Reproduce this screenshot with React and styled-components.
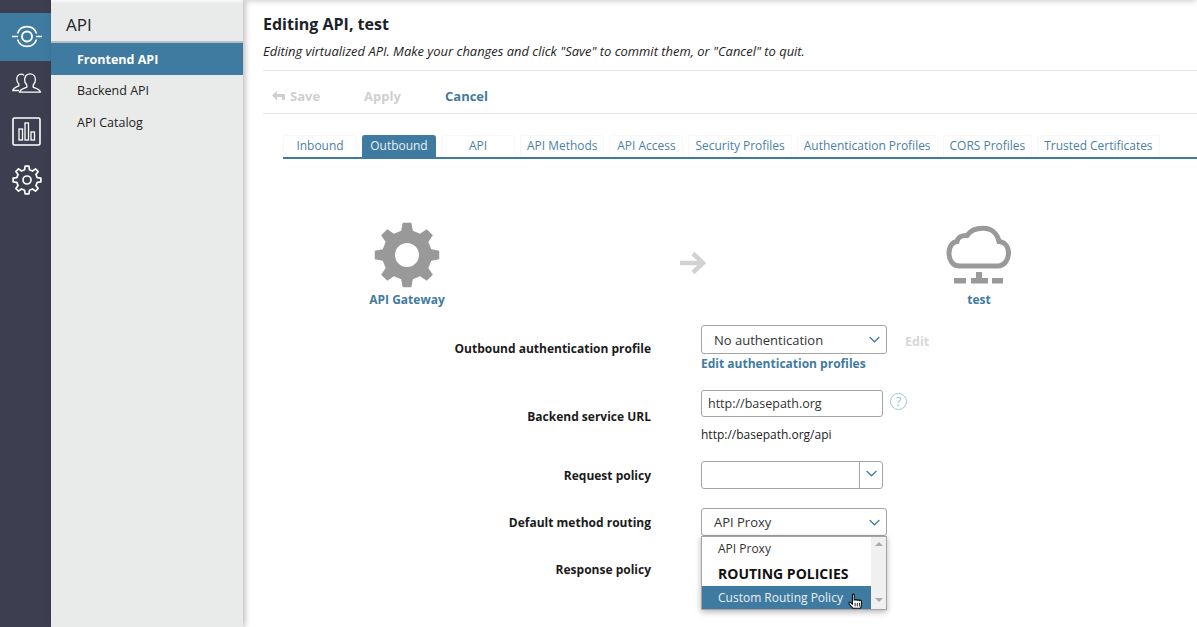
import React from 'react'
import styled, { createGlobalStyle } from 'styled-components'

const blue = '#3f7ba1'

const GlobalStyle = createGlobalStyle`
  html, body { margin: 0; padding: 0; height: 100%; overflow: hidden; background: #fff; }
  body { font-family: "Open Sans", "Noto Sans", sans-serif; color: #1b1b1b; }
  #root { height: 100%; }
  * { box-sizing: border-box; }
`

const gearPath = (cx, cy, outer, root, teeth, hole) => {
  const pts = []
  const step = (Math.PI * 2) / teeth
  for (let i = 0; i < teeth; i++) {
    const a = i * step - Math.PI / 2
    const w = step * 0.17
    const w2 = step * 0.3
    const p = (r, t) => `${(cx + r * Math.cos(t)).toFixed(2)} ${(cy + r * Math.sin(t)).toFixed(2)}`
    pts.push(p(root, a - w2), p(outer, a - w), p(outer, a + w), p(root, a + w2))
  }
  let d = `M${pts.join('L')}Z`
  if (hole) d += `M${cx - hole} ${cy}a${hole} ${hole} 0 1 0 ${hole * 2} 0a${hole} ${hole} 0 1 0 ${-hole * 2} 0Z`
  return d
}

const Page = styled.div`
  display: flex;
  height: 627px;
  width: 1197px;
  overflow: hidden;
`

const Rail = styled.nav`
  width: 51px;
  flex-shrink: 0;
  background: #3d3f51;
  padding-top: 13px;
  display: flex;
  flex-direction: column;
`

const RailItem = styled.div`
  height: ${p => p.$h}px;
  display: flex;
  align-items: center;
  justify-content: center;
  padding-left: 2px;
  background: ${p => (p.$active ? blue : 'transparent')};
  svg { display: block; }
`

const Sidebar = styled.aside`
  width: 192px;
  flex-shrink: 0;
  background: #e9ebea;
  box-shadow: 2px 0 6px rgba(0, 0, 0, 0.28);
  position: relative;
  z-index: 1;
  &::before {
    content: '';
    position: absolute;
    left: 0;
    right: 0;
    top: 0;
    height: 4px;
    background: linear-gradient(#f8f8f8, #e9ebea);
  }
`

const SideTitle = styled.div`
  height: 43px;
  padding: 12px 0 0 15px;
  font-size: 17px;
  line-height: 25px;
  color: #222;
  border-bottom: 2px solid #b9bdbd;
`

const SideItem = styled.div`
  height: 32px;
  padding-left: 26px;
  font-size: 12.5px;
  line-height: ${p => (p.$active ? '34px' : '32px')};
  font-weight: ${p => (p.$active ? 700 : 400)};
  background: ${p => (p.$active ? blue : 'transparent')};
  color: ${p => (p.$active ? '#fff' : '#222')};
`

const Main = styled.main`
  flex: 1;
  min-width: 0;
  padding: 0 0 0 20px;
  position: relative;
  &::before {
    content: '';
    position: absolute;
    left: 0;
    right: 0;
    top: -4px;
    height: 4px;
    box-shadow: 0 0 6px rgba(0, 0, 0, 0.3);
  }
`

const Title = styled.h1`
  margin: 0;
  padding-top: 13px;
  font-size: 16px;
  line-height: 23px;
  font-weight: 700;
  color: #1c2229;
`

const Subtitle = styled.p`
  margin: 0;
  padding-top: 6px;
  height: 35px;
  font-size: 12.95px;
  line-height: 18px;
  font-style: italic;
  color: #222;
  border-bottom: 1px solid #e6e6e6;
`

const Toolbar = styled.div`
  display: flex;
  align-items: center;
  height: 43px;
  border-bottom: 1px solid #e6e6e6;
  padding: 8px 0 0 9px;
`

const ToolButton = styled.span`
  display: flex;
  align-items: center;
  gap: 5px;
  font-size: 13px;
  font-weight: 700;
  width: ${p => p.$w}px;
  color: ${p => (p.$disabled ? '#cfcfcf' : blue)};
`

const Tabs = styled.div`
  display: flex;
  gap: 5px;
  margin: 21px 0 0 20px;
  height: 24px;
  border-bottom: 2px solid ${blue};
  width: 914px;
`

const Tab = styled.div`
  min-width: 74px;
  padding: 0 6px;
  height: 22px;
  text-align: center;
  font-size: 11.96px;
  line-height: 20px;
  border: 1px solid ${p => (p.$active ? blue : '#f8f8f8')};
  border-bottom: 0;
  border-radius: 3px 3px 0 0;
  background: ${p => (p.$active ? blue : '#fff')};
  color: ${p => (p.$active ? '#e8f0f5' : '#4b7fa3')};
  white-space: nowrap;
`

const Diagram = styled.div`
  display: grid;
  grid-template-columns: 120px 1fr 120px;
  align-items: start;
  width: 692px;
  margin: 63px 0 0 84px;
`

const Node = styled.div`
  display: flex;
  flex-direction: column;
  align-items: center;
  svg { display: block; }
`

const NodeLabel = styled.span`
  font-size: 12px;
  line-height: 16px;
  font-weight: 700;
  color: ${blue};
  margin-top: 4px;
`

const Arrow = styled.div`
  display: flex;
  justify-content: center;
  padding-top: 29px;
`

const Form = styled.div`
  display: grid;
  grid-template-columns: 388px 1fr;
  column-gap: 50px;
  margin-top: 17px;
`

const Label = styled.div`
  text-align: right;
  font-size: 12px;
  font-weight: 700;
  line-height: 17px;
  color: #1b1b1b;
  padding-top: ${p => p.$pt}px;
`

const Cell = styled.div`
  height: ${p => p.$h}px;
  position: relative;
`

const Line = styled.div`
  display: flex;
  align-items: flex-start;
  gap: ${p => p.$gap || 0}px;
`

const SelectBox = styled.div`
  width: ${p => p.$w}px;
  height: ${p => p.$h || 29}px;
  border: 1px solid #a4a4a4;
  border-radius: 3px;
  background: #fff;
  display: flex;
  align-items: center;
  font-size: 13px;
  color: #333;
`

const SelectText = styled.span`
  flex: 1;
  padding-left: 12px;
`

const Caret = styled.span`
  width: ${p => (p.$split ? '23px' : '24px')};
  align-self: stretch;
  display: flex;
  align-items: center;
  justify-content: center;
  border-left: ${p => (p.$split ? '1px solid #a4a4a4' : '0')};
  svg { margin-top: ${p => (p.$split ? '-4px' : '0')}; }
`

const TextBox = styled.div`
  width: 182px;
  height: 27px;
  border: 1px solid #a4a4a4;
  border-radius: 3px;
  padding-left: 6px;
  font-size: 12.5px;
  line-height: 25px;
  color: #333;
`

const LinkText = styled.div`
  font-size: 12px;
  line-height: 16px;
  font-weight: 700;
  color: ${blue};
  margin-top: 2px;
`

const DisabledEdit = styled.span`
  height: 29px;
  font-size: 12.5px;
  font-weight: 700;
  color: #d8d8d8;
  line-height: 33px;
`

const Plain = styled.div`
  font-size: 12px;
  line-height: 17px;
  color: #222;
  margin-top: 9px;
`

const Help = styled.span`
  width: 17px;
  height: 17px;
  border: 1px solid #9cc3da;
  border-radius: 50%;
  color: #9cc3da;
  font-size: 13px;
  line-height: 15px;
  text-align: center;
  margin-top: 3px;
`

const Menu = styled.div`
  position: absolute;
  top: 28px;
  left: 0;
  width: 186px;
  height: 74px;
  background: #fff;
  border: 1px solid #a4a4a4;
  box-shadow: 0 2px 6px rgba(0, 0, 0, 0.3);
  display: flex;
  z-index: 2;
`

const MenuList = styled.div`
  flex: 1;
  padding-top: 1px;
`

const MenuOption = styled.div`
  height: ${p => p.$h}px;
  padding-left: 16px;
  font-size: 12px;
  line-height: ${p => p.$h}px;
  color: ${p => (p.$active ? '#e8f0f5' : '#333')};
  background: ${p => (p.$active ? blue : 'transparent')};
`

const MenuGroup = styled.div`
  height: 26px;
  padding-left: 16px;
  font-size: 14px;
  line-height: 27px;
  font-weight: 700;
  color: #111;
`

const Scroll = styled.div`
  width: 15px;
  background: #f0f0f0;
  display: flex;
  flex-direction: column;
  justify-content: space-between;
  align-items: center;
  padding: 5px 0 7px;
`

const Tri = styled.span`
  width: 0;
  height: 0;
  border-left: 4px solid transparent;
  border-right: 4px solid transparent;
  ${p => (p.$down ? 'border-top: 4px solid #a9a9a9;' : 'border-bottom: 4px solid #a9a9a9;')}
`

const HandWrap = styled.span`
  position: absolute;
  left: 147px;
  top: 85px;
  z-index: 3;
  svg { display: block; }
`

const Chevron = () => (
  <svg width="11" height="7" viewBox="0 0 11 7" fill="none" stroke={blue} strokeWidth="1.2"><path d="M.6 1 5.500 5.800 10.400 1" /></svg>
)

const TargetIcon = () => (
  <svg width="30" height="24" viewBox="0 0 30 24" fill="none" stroke="#fff" strokeWidth="1.6">
    <path d="M5.500 8.500A10 10 0 0 1 24.500 8.500M5.500 14.500A10 10 0 0 0 24.500 14.500" />
    <circle cx="15" cy="11.500" r="5" strokeWidth="1.9" />
    <path d="M0 11.500h6M24 11.500h6" />
  </svg>
)

const UsersIcon = () => (
  <svg width="30" height="20" viewBox="0 0 30 20" fill="none" stroke="#fff" strokeWidth="1.3">
    <path d="M12 2.400C11.200 1.500 10.200 1.200 9 1.200 6.400 1.200 4.800 3.400 4.800 6c0 2.400.9 4 2 5v1.800C4.500 14 1.300 14.500.8 17.500H7" />
    <path d="M18 .8c-3.200 0-5.400 2.500-5.400 5.800 0 2.600.9 4.400 2.200 5.500v2c-2.600 1.400-6.600 1.800-7.200 5h20.800c-.6-3.200-4.600-3.600-7.200-5v-2c1.300-1.100 2.200-2.900 2.200-5.500C23.400 3.300 21.200.8 18 .8z" />
  </svg>
)

const ChartIcon = () => (
  <svg width="29" height="29" viewBox="0 0 29 29" fill="none" stroke="#fff">
    <rect x="1" y="1" width="27" height="27" rx="1.500" strokeWidth="1.6" />
    <rect x="7" y="12" width="3.500" height="11" strokeWidth="1.3" />
    <rect x="13" y="6" width="3.500" height="17" strokeWidth="1.3" />
    <rect x="19" y="15" width="3.500" height="8" strokeWidth="1.3" />
  </svg>
)

const OutlineGear = () => (
  <svg width="30" height="30" viewBox="0 0 30 30" fill="none" stroke="#fff" strokeWidth="1.7" strokeLinejoin="round">
    <path d={gearPath(15, 15, 14, 10.5, 8)} />
    <circle cx="15" cy="15" r="4" />
  </svg>
)

const BigGear = () => (
  <svg width="66" height="66" viewBox="0 0 66 66">
    <path fill="#999" fillRule="evenodd" d={gearPath(33, 33, 32.5, 25, 8, 12)} />
  </svg>
)

const CloudIcon = () => (
  <svg width="66" height="66" viewBox="0 0 66 66">
    <path fill="none" stroke="#999" strokeWidth="5" d="M14 44C6.500 44 3 38 3 31 3 24 7 20 11 19.500 12 15 16 13 21 13.500 24 9 30 6.200 37 6.200 46 6.200 51.500 12 53 19.500 59 20 62.500 25 62.500 31 62.500 38 58 44 52 44Z" />
    <path fill="#999" d="M8 56h12v5.500H8zM46 56h11v5.500H46zM25 56h5v-6h6v6h6v5.500H25z" />
  </svg>
)

const BackIcon = () => (
  <svg width="13" height="10" viewBox="0 0 13 10"><path fill="#cfcfcf" d="M0 4.500 5 0v3h8v3H5v3.500z M10 3h3v6h-3z" /></svg>
)

const ArrowIcon = () => (
  <svg width="28" height="24" viewBox="0 0 28 24" fill="none" stroke="#d2d2d2" strokeWidth="4.5"><path d="M1 12h23M14 2.500 24 12 14 21.500" /></svg>
)

const HandIcon = () => (
  <svg width="16" height="18" viewBox="0 0 18 20">
    <path fill="#fff" stroke="#111" strokeWidth="1.3" strokeLinejoin="round" d="M5 1.800c0-1.100 2-1.100 2 0V8c0-1 2-1 2 0 0-1 2-1 2 .2 0-1 2.100-1 2.100.3 0-.8 2-.8 2 .5v4.500c0 1.500-.6 2.500-1.100 3.500H5.500C4.500 15.500 1.500 13.500 1 11.500c-.3-1.200 1-1.700 2-.8l2 1.800z" />
    <path stroke="#111" strokeWidth="1" d="M8 11v4M10.500 11v4M13 11v4" />
  </svg>
)

const tabs = ['Inbound', 'Outbound', 'API', 'API Methods', 'API Access', 'Security Profiles', 'Authentication Profiles', 'CORS Profiles', 'Trusted Certificates']

export default function App() {
  return (
    <Page>
      <GlobalStyle />
      <Rail>
        <RailItem $h={48} $active><TargetIcon /></RailItem>
        <RailItem $h={44}><UsersIcon /></RailItem>
        <RailItem $h={52}><ChartIcon /></RailItem>
        <RailItem $h={46}><OutlineGear /></RailItem>
      </Rail>
      <Sidebar>
        <SideTitle>API</SideTitle>
        <SideItem $active>Frontend API</SideItem>
        <SideItem>Backend API</SideItem>
        <SideItem>API Catalog</SideItem>
      </Sidebar>
      <Main>
        <Title>Editing API, test</Title>
        <Subtitle>Editing virtualized API. Make your changes and click "Save" to commit them, or "Cancel" to quit.</Subtitle>
        <Toolbar>
          <ToolButton $disabled $w={92}><BackIcon />Save</ToolButton>
          <ToolButton $disabled $w={81}>Apply</ToolButton>
          <ToolButton>Cancel</ToolButton>
        </Toolbar>
        <Tabs>
          {tabs.map(t => <Tab key={t} $active={t === 'Outbound'}>{t}</Tab>)}
        </Tabs>
        <Diagram>
          <Node><BigGear /><NodeLabel>API Gateway</NodeLabel></Node>
          <Arrow><ArrowIcon /></Arrow>
          <Node><CloudIcon /><NodeLabel>test</NodeLabel></Node>
        </Diagram>
        <Form>
          <Label $pt={15}>Outbound authentication profile</Label>
          <Cell $h={65}>
            <Line $gap={18}>
              <SelectBox $w={186}><SelectText>No authentication</SelectText><Caret><Chevron /></Caret></SelectBox>
              <DisabledEdit>Edit</DisabledEdit>
            </Line>
            <LinkText>Edit authentication profiles</LinkText>
          </Cell>
          <Label $pt={18}>Backend service URL</Label>
          <Cell $h={71}>
            <Line $gap={7}>
              <TextBox>http://basepath.org</TextBox>
              <Help>?</Help>
            </Line>
            <Plain>http://basepath.org/api</Plain>
          </Cell>
          <Label $pt={6}>Request policy</Label>
          <Cell $h={47}>
            <SelectBox $w={182} $h={28}><SelectText /><Caret $split><Chevron /></Caret></SelectBox>
          </Cell>
          <Label $pt={6}>Default method routing</Label>
          <Cell $h={47}>
            <SelectBox $w={186} $h={28}><SelectText>API Proxy</SelectText><Caret><Chevron /></Caret></SelectBox>
            <Menu>
              <MenuList>
                <MenuOption $h={22}>API Proxy</MenuOption>
                <MenuGroup>ROUTING POLICIES</MenuGroup>
                <MenuOption $h={23} $active>Custom Routing Policy</MenuOption>
              </MenuList>
              <Scroll><Tri /><Tri $down /></Scroll>
            </Menu>
            <HandWrap><HandIcon /></HandWrap>
          </Cell>
          <Label $pt={6}>Response policy</Label>
          <Cell $h={30} />
        </Form>
      </Main>
    </Page>
  )
}
